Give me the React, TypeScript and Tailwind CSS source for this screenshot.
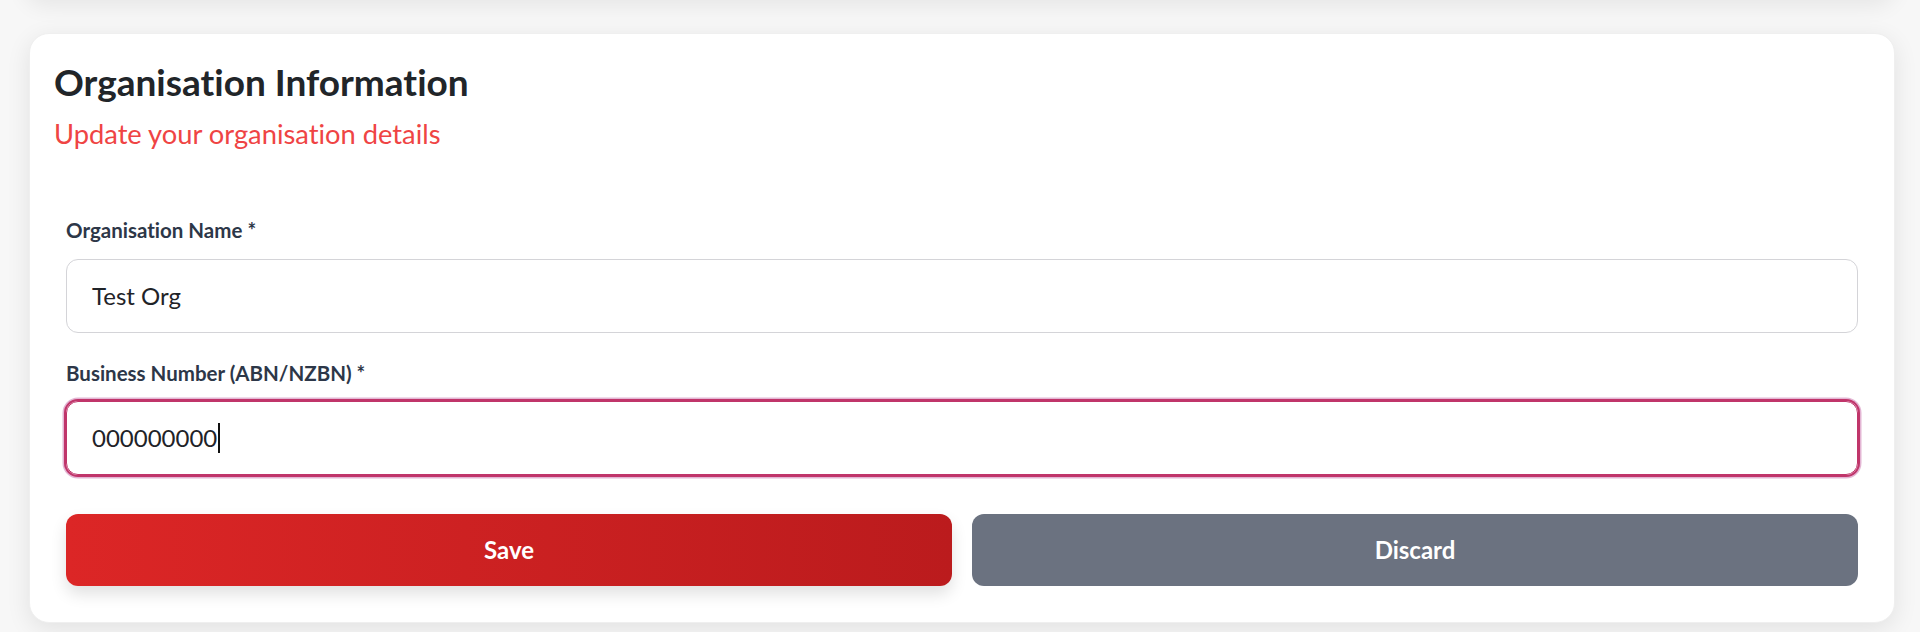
export default function App() {
  return (
    <main className="min-h-screen overflow-hidden bg-[#f7f7f7] pb-10 font-['Lato','Open_Sans',sans-serif] [font-variant-ligatures:none]">
      {/* bottom edge of the card above, only its shadow shows */}
      <div className="mx-[25px] -mt-10 h-10 rounded-b-[20px] bg-white shadow-[0_6px_22px_rgba(0,0,0,0.07)]" />

      <section className="mt-[33px] ml-[29px] mr-[25px] rounded-[20px] border border-[#efefef] bg-white p-6 shadow-[0_6px_24px_rgba(0,0,0,0.09)]">
        <h2 className="mt-1 text-[37px] leading-10 font-bold text-[#212529]">Organisation Information</h2>
        <p className="mt-[16px] text-[27.3px] leading-8 text-[#ef4444]">Update your organisation details</p>

        <form className="mt-[54px] flex flex-col p-3">
          <label className="text-[20.5px] leading-7 font-bold text-[#2d3748]">Organisation Name *</label>
          <div className="mt-[15px] flex h-[74px] items-center rounded-xl border border-[#d4d4d8] px-[25px] text-2xl text-[#1f2328]">
            Test Org
          </div>

          <label className="mt-[26px] text-[20.5px] leading-7 font-bold text-[#2d3748]">Business Number (ABN/NZBN) *</label>
          <div className="mt-[14px] flex h-[74px] items-center rounded-xl border border-[#c0356a] px-[25px] text-2xl text-[#1f2328] shadow-[0_0_0_2px_#c0356a,0_0_0_3.5px_#e3b6d4]">
            000000000
            <span className="ml-px h-[30px] w-[2px] bg-[#111]" />
          </div>

          <div className="mt-[39px] grid grid-cols-2 gap-5">
            <button
              type="button"
              className="h-[72px] rounded-xl bg-linear-to-r from-[#dc2626] to-[#bb1b1d] text-2xl font-bold text-white shadow-[0_8px_16px_rgba(0,0,0,0.12)]"
            >
              Save
            </button>
            <button type="button" className="h-[72px] rounded-xl bg-[#6b7280] text-2xl font-bold text-white">
              Discard
            </button>
          </div>
        </form>
      </section>
    </main>
  );
}
